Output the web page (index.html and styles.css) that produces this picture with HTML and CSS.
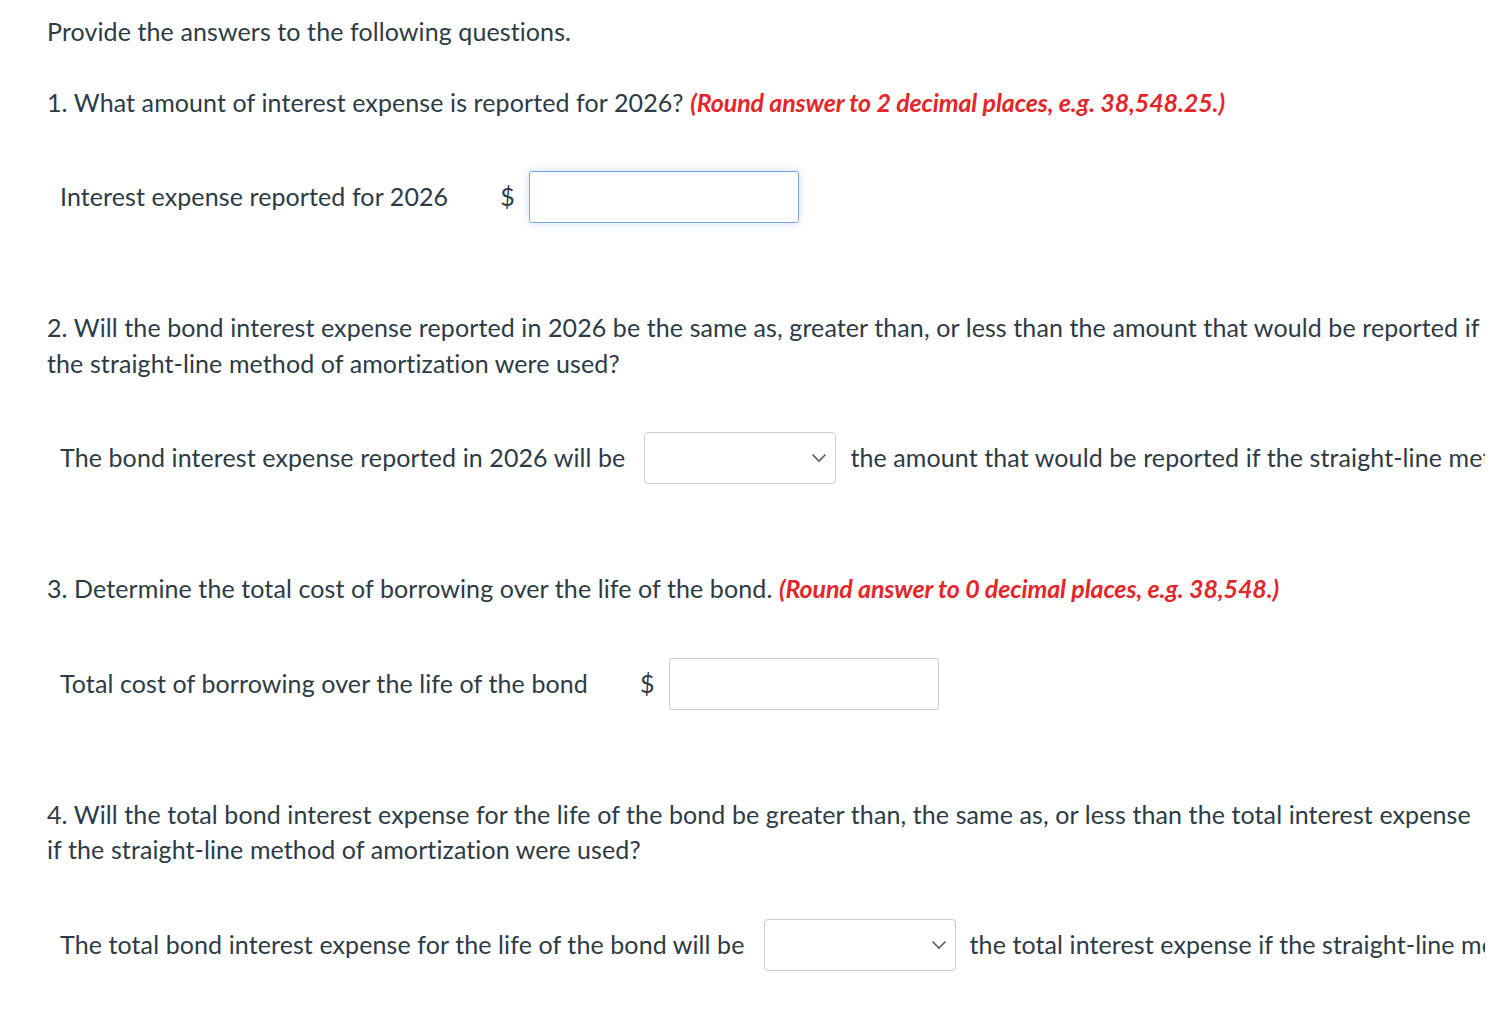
FILE: index.html
```html
<!DOCTYPE html>
<html lang="en">
<head>
<meta charset="utf-8">
<title>Questions</title>
<link rel="stylesheet" href="styles.css">
</head>
<body>
<div class="page">
  <p class="intro">Provide the answers to the following questions.</p>

  <p class="question">1. What amount of interest expense is reported for 2026? <span class="hint">(Round answer to 2 decimal places, e.g. 38,548.25.)</span></p>
  <div class="row">
    <span class="label">Interest expense reported for 2026</span>
    <span class="dollar">$</span>
    <span class="input focused"></span>
  </div>

  <p class="question">2. Will the bond interest expense reported in 2026 be the same as, greater than, or less than the amount that would be reported if the straight-line method of amortization were used?</p>
  <div class="row">
    <span class="label sel-label">The bond interest expense reported in 2026 will be</span>
    <span class="select"><svg class="chev" width="16" height="10" viewBox="0 0 16 10"><path d="M1.5 1.5 L8 8 L14.5 1.5" fill="none" stroke="#555d63" stroke-width="1.6"/></svg></span>
    <span class="after">the amount that would be reported if the straight-line method of amortization were used.</span>
  </div>

  <p class="question">3. Determine the total cost of borrowing over the life of the bond. <span class="hint">(Round answer to 0 decimal places, e.g. 38,548.)</span></p>
  <div class="row">
    <span class="label">Total cost of borrowing over the life of the bond</span>
    <span class="dollar">$</span>
    <span class="input"></span>
  </div>

  <p class="question">4. Will the total bond interest expense for the life of the bond be greater than, the same as, or less than the total interest expense if the straight-line method of amortization were used?</p>
  <div class="row">
    <span class="label sel-label">The total bond interest expense for the life of the bond will be</span>
    <span class="select"><svg class="chev" width="16" height="10" viewBox="0 0 16 10"><path d="M1.5 1.5 L8 8 L14.5 1.5" fill="none" stroke="#555d63" stroke-width="1.6"/></svg></span>
    <span class="after">the total interest expense if the straight-line method of amortization were used.</span>
  </div>
</div>
</body>
</html>
```

FILE: styles.css
```css
html, body {
  margin: 0;
  padding: 0;
  background: #ffffff;
}

body {
  font-family: Lato, "Open Sans", sans-serif;
  font-size: 25px;
  line-height: 35.5px;
  letter-spacing: 0.1px;
  color: #2d3b45;
}

.page {
  width: 1438px;
  margin-left: 47px;
  padding-top: 14px;
  overflow: hidden;
}

p {
  margin: 0;
}

.intro {
  margin-bottom: 35px;
}

.question {
  margin-bottom: 51px;
}

.hint {
  color: #e4262a;
  font-weight: 700;
  font-style: italic;
  letter-spacing: -0.12px;
}

.row {
  display: flex;
  align-items: center;
  padding-left: 13px;
  margin-bottom: 87px;
  white-space: nowrap;
}

.label {
  margin-right: 52px;
}

.sel-label {
  margin-right: 19px;
}

.dollar {
  margin-right: 14px;
}

.input {
  display: block;
  flex: none;
  width: 270px;
  height: 52px;
  box-sizing: border-box;
  border: 1px solid #c7cdd1;
  border-radius: 3px;
  background: #fff;
}

.input.focused {
  border-color: #7ba6e6;
  box-shadow: 0 0 8px rgba(102, 160, 230, 0.35);
}

.select {
  display: flex;
  flex: none;
  align-items: center;
  justify-content: flex-end;
  width: 192px;
  height: 52px;
  box-sizing: border-box;
  padding-right: 8px;
  border: 1px solid #c7cdd1;
  border-radius: 4px;
  background: #fff;
  margin-right: 14px;
}

.chev {
  display: block;
}
```
